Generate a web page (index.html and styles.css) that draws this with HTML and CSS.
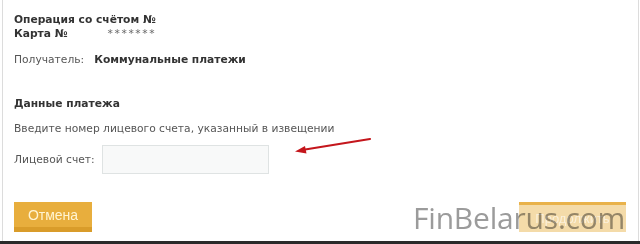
FILE: index.html
```html
<!DOCTYPE html>
<html lang="ru">
<head>
<meta charset="utf-8">
<link rel="stylesheet" href="styles.css">
</head>
<body>
<div class="frame">
  <div class="panel">
    <div class="head">
      <div class="bold">Операция со счётом №</div>
      <div class="bold">Карта №<span class="mask">*******</span></div>
    </div>
    <div class="row recipient">
      <span class="label">Получатель:</span>
      <span class="bold">Коммунальные платежи</span>
    </div>
    <div class="section-title bold">Данные платежа</div>
    <div class="hint">Введите номер лицевого счета, указанный в извещении</div>
    <div class="row field">
      <label class="label" for="acc">Лицевой счет:</label>
      <input id="acc" class="input" type="text">
      <svg class="arrow" width="80" height="20" viewBox="0 0 80 20">
        <path d="M76 3 L8 14" stroke="#c4161c" stroke-width="2.2" fill="none" stroke-linecap="round"/>
        <path d="M1 15.5 L11 10 L12.5 17.5 Z" fill="#c4161c"/>
      </svg>
    </div>
    <div class="actions">
      <button class="btn cancel">Отмена</button>
      <button class="btn next">Продолжить</button>
    </div>
  </div>
  <div class="watermark">FinBelarus.com</div>
</div>
</body>
</html>
```
FILE: styles.css
```css
html, body {
  margin: 0;
  padding: 0;
  background: #fff;
}
.frame {
  position: relative;
  width: 640px;
  height: 244px;
  box-sizing: border-box;
  border-bottom: 3px solid #2a2a2a;
  overflow: hidden;
}
.panel {
  margin: 0 1px 0 2px;
  height: 241px;
  box-sizing: border-box;
  border-left: 1px solid #dcdcdc;
  border-right: 1px solid #dcdcdc;
  padding: 13px 12px 0 11px;
  font-family: "DejaVu Sans", Verdana, sans-serif;
  font-size: 10.7px;
  color: #555;
}
.bold {
  font-weight: bold;
  color: #333;
}
.head {
  line-height: 14px;
}
.mask {
  font-weight: normal;
  color: #666;
  margin-left: 40px;
  letter-spacing: 1.6px;
}
.row {
  display: flex;
  align-items: center;
}
.recipient {
  margin-top: 12px;
  gap: 10px;
  line-height: 14px;
}
.label {
  color: #555;
}
.section-title {
  margin-top: 30px;
  line-height: 14px;
}
.hint {
  margin-top: 11px;
  line-height: 14px;
}
.field {
  margin-top: 9px;
  gap: 7px;
}
.input {
  width: 167px;
  height: 29px;
  box-sizing: border-box;
  border: 1px solid #dfe3e3;
  background: #f8f9f9;
  margin: 0;
  padding: 0;
}
.arrow {
  margin-left: 18px;
  margin-top: -28px;
}
.actions {
  margin-top: 28px;
  display: flex;
  justify-content: space-between;
}
.btn {
  font-family: "Liberation Sans", Arial, sans-serif;
  font-size: 14px;
  border: 0;
  margin: 0;
  padding: 0;
  box-sizing: border-box;
  height: 30px;
}
.cancel {
  width: 78px;
  background: #e8ae3d;
  border-bottom: 5px solid #d99c2a;
  color: #fff4d2;
}
.next {
  width: 107px;
  background: #f4dba9;
  border-top: 3px solid #e9b24a;
  color: #fbf0da;
  font-size: 13px;
}
.watermark {
  position: absolute;
  left: 413px;
  top: 198px;
  font-family: "Open Sans", sans-serif;
  font-size: 30px;
  letter-spacing: -0.2px;
  color: #9b9b9b;
  mix-blend-mode: multiply;
  line-height: 40px;
}
```
